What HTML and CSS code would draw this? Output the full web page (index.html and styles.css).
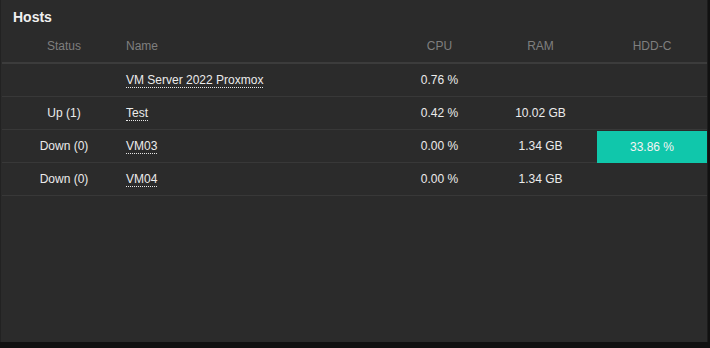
FILE: index.html
```html
<!DOCTYPE html>
<html lang="en">
<head>
<meta charset="utf-8">
<title>Hosts</title>
<link rel="stylesheet" href="styles.css">
</head>
<body>
  <section class="panel">
    <h2 class="panel-title">Hosts</h2>
    <div class="hosts">
      <div class="row head">
        <div class="cell c">Status</div>
        <div class="cell">Name</div>
        <div class="cell c">CPU</div>
        <div class="cell c">RAM</div>
        <div class="cell c">HDD-C</div>
      </div>
      <div class="row">
        <div class="cell c"></div>
        <div class="cell"><span class="name">VM Server 2022 Proxmox</span></div>
        <div class="cell c">0.76 %</div>
        <div class="cell c"></div>
        <div class="cell c"></div>
      </div>
      <div class="row">
        <div class="cell c">Up (1)</div>
        <div class="cell"><span class="name">Test</span></div>
        <div class="cell c">0.42 %</div>
        <div class="cell c">10.02 GB</div>
        <div class="cell c"></div>
      </div>
      <div class="row">
        <div class="cell c">Down (0)</div>
        <div class="cell"><span class="name">VM03</span></div>
        <div class="cell c">0.00 %</div>
        <div class="cell c">1.34 GB</div>
        <div class="cell c ok">33.86 %</div>
      </div>
      <div class="row">
        <div class="cell c">Down (0)</div>
        <div class="cell"><span class="name">VM04</span></div>
        <div class="cell c">0.00 %</div>
        <div class="cell c">1.34 GB</div>
        <div class="cell c"></div>
      </div>
    </div>
  </section>
</body>
</html>
```
FILE: styles.css
```css
html, body {
  margin: 0;
  padding: 0;
  background: #111111;
}

body {
  width: 710px;
  height: 348px;
  font-family: "Liberation Sans", Arial, sans-serif;
  font-size: 12px;
  color: #ececec;
}

.panel {
  box-sizing: border-box;
  width: 708px;
  height: 342px;
  background: #2b2b2b;
  border-left: 1px solid #222222;
  border-right: 1px solid #1c1c1c;
  padding-left: 1px;
}

.panel-title {
  margin: 0;
  height: 30px;
  padding-left: 11px;
  font-size: 14px;
  font-weight: bold;
  line-height: 34px;
  color: #f0f0f0;
}

.hosts {
  display: flex;
  flex-direction: column;
}

.row {
  display: grid;
  grid-template-columns: 124px 269px 89px 113px 110px;
  height: 32px;
  border-bottom: 1px solid #383838;
}

.row.head {
  height: 32px;
  border-bottom: 2px solid #3c3c3c;
  color: #7f7f7f;
}

.cell {
  display: flex;
  align-items: center;
  white-space: nowrap;
}

.row.head .cell {
  padding-top: 0;
}

.cell.c {
  justify-content: center;
}

.cell.ok {
  background: #10c7ab;
  color: #f4f4f4;
  margin-top: 1px;
  margin-bottom: -1px;
}

.name {
  border-bottom: 1px dotted #e6e6e6;
  line-height: 13px;
  padding-top: 2px;
}
```
